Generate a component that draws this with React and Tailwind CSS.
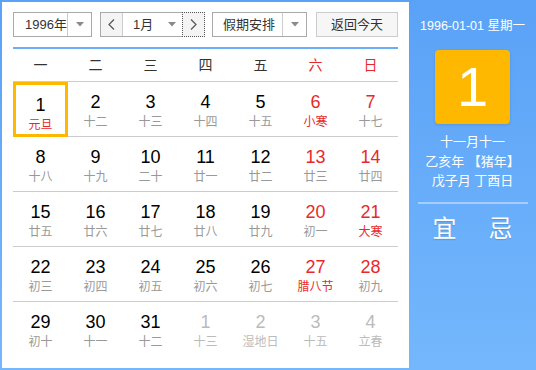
import React from 'react';

const weekdays = ['一', '二', '三', '四', '五', '六', '日'];

const days = [
  [1, '元旦', 'h'], [2, '十二'], [3, '十三'], [4, '十四'], [5, '十五'], [6, '小寒', 'h'], [7, '十七'],
  [8, '十八'], [9, '十九'], [10, '二十'], [11, '廿一'], [12, '廿二'], [13, '廿三'], [14, '廿四'],
  [15, '廿五'], [16, '廿六'], [17, '廿七'], [18, '廿八'], [19, '廿九'], [20, '初一'], [21, '大寒', 'h'],
  [22, '初三'], [23, '初四'], [24, '初五'], [25, '初六'], [26, '初七'], [27, '腊八节', 'h'], [28, '初九'],
  [29, '初十'], [30, '十一'], [31, '十二'], [1, '十三', 'o'], [2, '湿地日', 'o'], [3, '十五', 'o'], [4, '立春', 'o'],
];

function Arrow() {
  return (
    <svg width="8" height="5" viewBox="0 0 8 5">
      <path d="M0 0 L8 0 L4 4.5 Z" fill="#8a8a8a" />
    </svg>
  );
}

function DayCell({ day, index }) {
  const [num, lunar, kind] = day;
  const col = index % 7;
  const lastRow = index >= 28;
  const selected = index === 0;
  const other = kind === 'o';
  const weekend = col >= 5;

  let numColor = 'text-black';
  if (other) numColor = 'text-[#bbbbbb]';
  else if (weekend) numColor = 'text-[#e8292b]';

  let lunarColor = 'text-[#999999]';
  if (other) lunarColor = 'text-[#bbbbbb]';
  else if (kind === 'h') lunarColor = 'text-[#e8292b]';

  return (
    <div
      className={`flex h-[55px] flex-col items-center pt-[10px] ${
        selected ? 'border-[3px] border-[#ffb800] pt-[7px]' : lastRow ? '' : 'border-b border-[#cccccc]'
      }`}
    >
      <span className={`text-[18px] leading-[20px] ${numColor}`}>{num}</span>
      <span className={`mt-[2px] text-[12px] leading-[16px] ${lunarColor}`}>{lunar}</span>
    </div>
  );
}

export default function App() {
  return (
    <div
      className="flex h-[370px] w-[536px] bg-gradient-to-b from-[#5aa2f7] to-[#74b7fc] text-[#333333]"
      style={{ fontFamily: '"Liberation Sans", "Noto Sans CJK SC", sans-serif' }}
    >
      <div className="mb-[2px] ml-[2px] mt-[2px] flex w-[407px] flex-col bg-white px-[11px] pt-[10px]">
        <div className="flex h-[25px] items-stretch text-[13px]">
          <div className="flex w-[79px] border border-[#aaaaaa]">
            <div className="flex flex-1 items-center pl-[11px]">1996年</div>
            <div className="flex w-[24px] items-center justify-center border-l border-[#cccccc]">
              <Arrow />
            </div>
          </div>

          <div className="ml-[8px] flex w-[105px] border border-[#aaaaaa]">
            <div className="flex w-[22px] items-center justify-center border-r border-[#cccccc] bg-[#f4f4f4] text-[#555555]">
              <svg width="7" height="11" viewBox="0 0 7 11">
                <path d="M6 0.5 L1 5.5 L6 10.5" fill="none" stroke="#555" strokeWidth="1.2" />
              </svg>
            </div>
            <div className="flex flex-1 items-center justify-between pl-[10px] pr-[6px]">
              <span>1月</span>
              <Arrow />
            </div>
            <div className="-my-px -mr-px flex w-[23px] items-center justify-center border border-dotted border-[#555555] bg-[#f4f4f4]">
              <svg width="7" height="11" viewBox="0 0 7 11">
                <path d="M1 0.5 L6 5.5 L1 10.5" fill="none" stroke="#555" strokeWidth="1.2" />
              </svg>
            </div>
          </div>

          <div className="ml-[7px] flex w-[95px] border border-[#aaaaaa]">
            <div className="flex flex-1 items-center pl-[10px]">假期安排</div>
            <div className="flex w-[24px] items-center justify-center border-l border-[#cccccc]">
              <Arrow />
            </div>
          </div>

          <div className="ml-[9px] flex w-[82px] items-center justify-center border border-[#cccccc] bg-[#f6f6f6]">
            返回今天
          </div>
        </div>

        <div className="mt-[10px] h-[2px] bg-[#6aaef8]" />

        <div className="grid grid-cols-7">
          {weekdays.map((w, i) => (
            <div
              key={w}
              className={`flex h-[33px] items-center justify-center border-b border-[#cccccc] text-[14px] ${
                i >= 5 ? 'text-[#e8292b]' : 'text-[#333333]'
              }`}
            >
              {w}
            </div>
          ))}
          {days.map((d, i) => (
            <DayCell key={i} day={d} index={i} />
          ))}
        </div>
      </div>

      <div className="flex flex-1 flex-col items-center text-white">
        <div className="mt-[18px] text-[12.5px] leading-[16px]">1996-01-01 星期一</div>
        <div className="mt-[16px] flex h-[74px] w-[75px] items-center justify-center rounded-[4px] bg-[#ffb800] text-[56px] leading-none shadow-[0_1px_3px_rgba(0,0,0,0.12)]">
          1
        </div>
        <div className="mt-[8px] flex flex-col items-center text-[13px] leading-[19.5px]">
          <span>十一月十一</span>
          <span>乙亥年 【猪年】</span>
          <span>戊子月 丁酉日</span>
        </div>
        <div className="mt-[11px] h-[2px] w-[110px] bg-white/40" />
        <div className="mt-[10px] flex gap-[32px] text-[24px] leading-[30px] [text-shadow:0_1px_1px_rgba(0,0,0,0.15)]">
          <span>宜</span>
          <span>忌</span>
        </div>
      </div>
    </div>
  );
}
